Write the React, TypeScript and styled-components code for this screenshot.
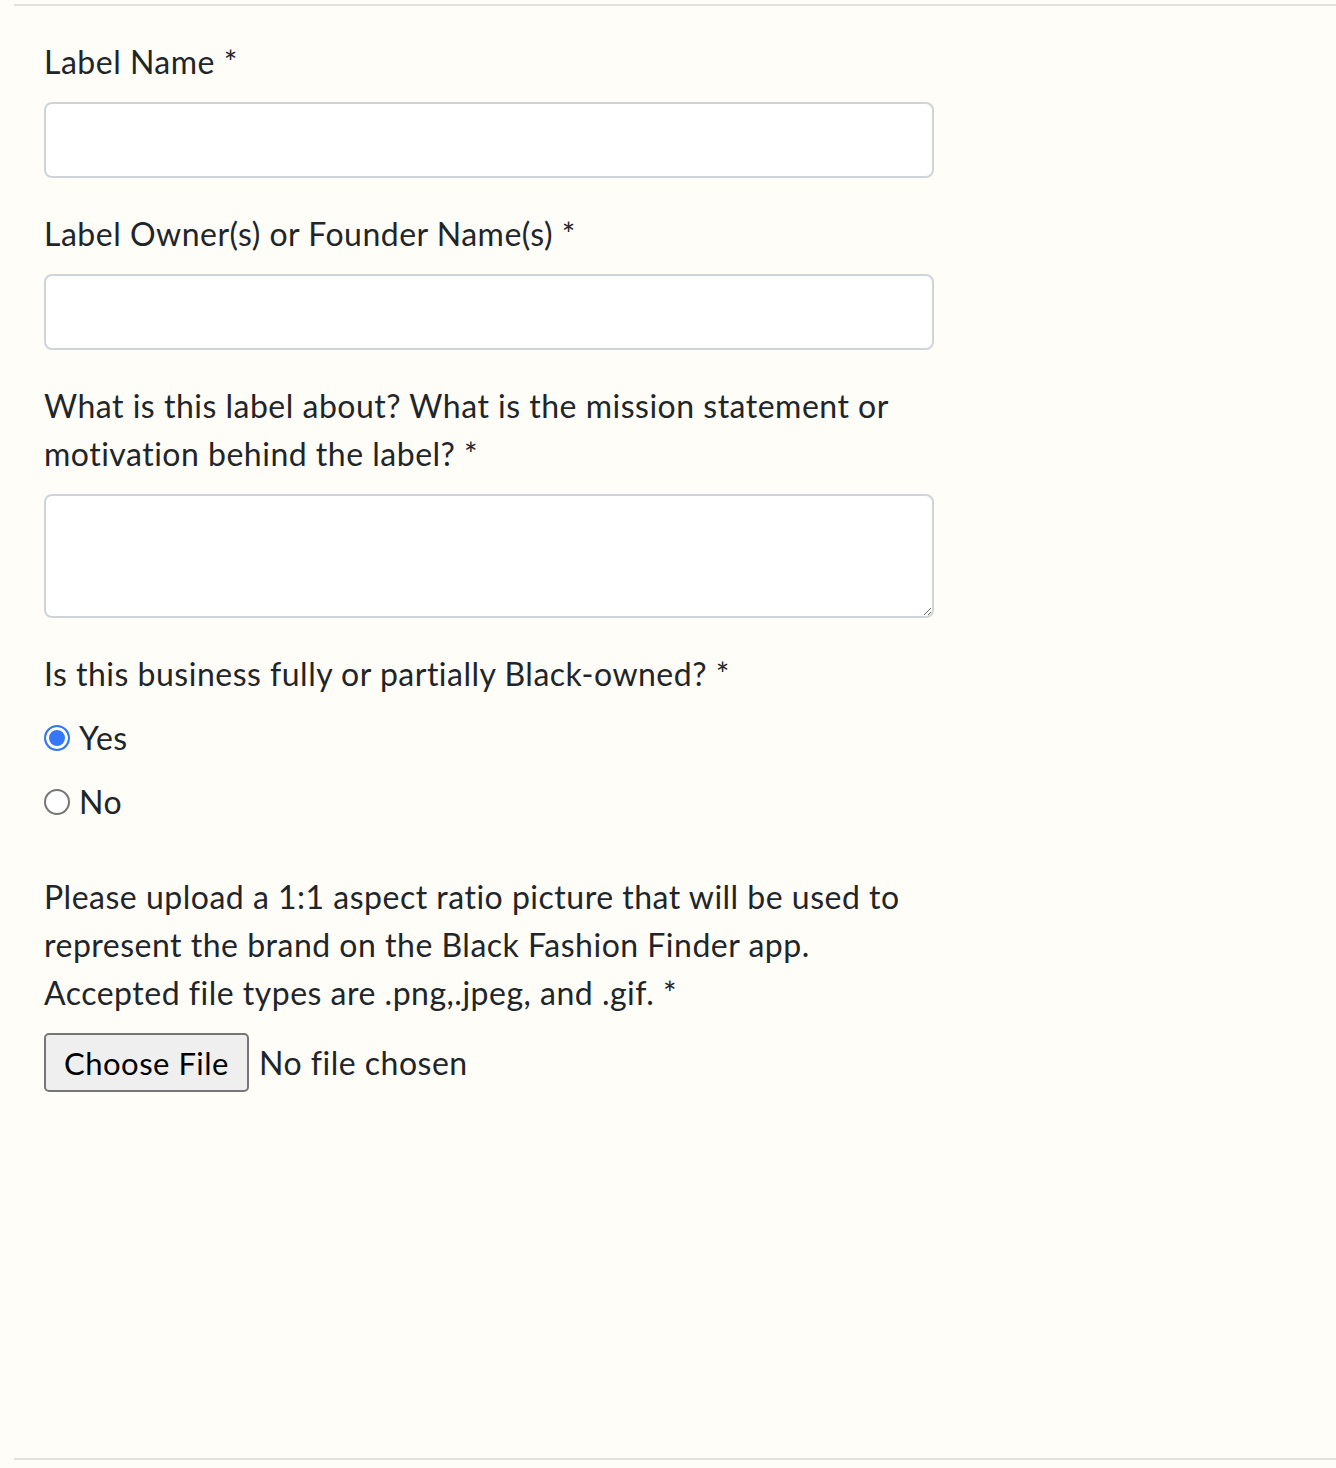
import styled, { createGlobalStyle } from 'styled-components'

const GlobalStyle = createGlobalStyle`
  html, body {
    margin: 0;
    padding: 0;
    background: #fefdf8;
  }
  body {
    overflow-x: hidden;
    font-family: Lato, "Open Sans", "Liberation Sans", sans-serif;
    color: #212529;
  }
  * {
    box-sizing: border-box;
  }
`

const Page = styled.div`
  background: #fefdf8;
  min-height: 1468px;
  padding-top: 4px;
`

// the form panel, lined top and bottom
const Panel = styled.form`
  margin-left: 14px;
  border-top: 2px solid #e4e2dc;
  border-bottom: 2px solid #e4e2dc;
  padding: 32px 30px 0;
  height: 1456px;
`

const Fields = styled.div`
  width: 890px;
  display: flex;
  flex-direction: column;
`

const Group = styled.div<{ $space?: number }>`
  display: flex;
  flex-direction: column;
  margin-bottom: ${({ $space }) => $space ?? 32}px;
`

const Label = styled.label`
  display: block;
  font-size: 32px;
  line-height: 48px;
  margin-bottom: 16px;
  letter-spacing: 0.5px;
`

const fieldStyles = `
  width: 100%;
  border: 2px solid #ced4da;
  border-radius: 8px;
  background: #fff;
  font-family: inherit;
  font-size: 32px;
  color: #495057;
  padding: 12px 24px;
  outline: none;
`

const Input = styled.input`
  ${fieldStyles};
  height: 76px;
`

const TextArea = styled.textarea`
  ${fieldStyles};
  height: 124px;
  resize: vertical;
  display: block;
`

const Options = styled.div`
  display: flex;
  flex-direction: column;
  gap: 16px;
`

const Option = styled.label`
  display: flex;
  align-items: center;
  gap: 9px;
  font-size: 32px;
  line-height: 48px;
  letter-spacing: 0.5px;
`

const Radio = styled.input.attrs({ type: 'radio' })`
  appearance: none;
  margin: 0;
  width: 26px;
  height: 26px;
  border-radius: 50%;
  border: 2px solid #767676;
  background: #fff;
  flex: none;

  &:checked {
    border-color: #3478f6;
    background: #3478f6;
    box-shadow: inset 0 0 0 3px #fff;
  }
`

const FileRow = styled.div`
  display: flex;
  align-items: center;
  gap: 10px;
  font-size: 32px;
  letter-spacing: 0.5px;
`

const FileButton = styled.label`
  display: inline-flex;
  align-items: center;
  justify-content: center;
  width: 205px;
  height: 59px;
  background: #efefef;
  border: 2px solid #767676;
  border-radius: 5px;
  font-size: 31px;
  color: #000;
  cursor: pointer;

  input {
    display: none;
  }
`

const FileName = styled.span`
  color: #212529;
`

export default function App() {
  return (
    <Page>
      <GlobalStyle />
      <Panel>
        <Fields>
          <Group>
            <Label htmlFor='labelName'>Label Name *</Label>
            <Input id='labelName' type='text' />
          </Group>
          <Group>
            <Label htmlFor='founders'>Label Owner(s) or Founder Name(s) *</Label>
            <Input id='founders' type='text' />
          </Group>
          <Group>
            <Label htmlFor='mission'>
              What is this label about? What is the mission statement or
              motivation behind the label? *
            </Label>
            <TextArea id='mission' rows={2} />
          </Group>
          <Group $space={47}>
            <Label>Is this business fully or partially Black-owned? *</Label>
            <Options>
              <Option>
                <Radio name='blackOwned' defaultChecked />
                Yes
              </Option>
              <Option>
                <Radio name='blackOwned' />
                No
              </Option>
            </Options>
          </Group>
          <Group>
            <Label>
              Please upload a 1:1 aspect ratio picture that will be used to
              represent the brand on the Black Fashion Finder app. Accepted
              file types are .png,.jpeg, and .gif. *
            </Label>
            <FileRow>
              <FileButton>
                Choose File
                <input type='file' accept='.png,.jpeg,.gif' />
              </FileButton>
              <FileName>No file chosen</FileName>
            </FileRow>
          </Group>
        </Fields>
      </Panel>
    </Page>
  )
}
